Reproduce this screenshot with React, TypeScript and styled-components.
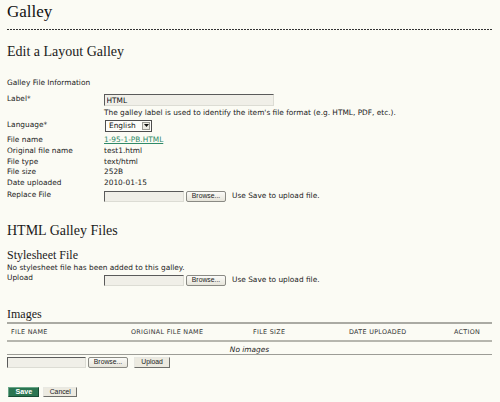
import React from 'react';
import styled, { createGlobalStyle, css } from 'styled-components';

const GlobalStyle = createGlobalStyle`
  html, body {
    margin: 0;
    padding: 0;
    background: #fbfbf4;
  }
  body {
    font-family: "DejaVu Sans", Verdana, sans-serif;
    font-size: 7.4px;
    color: #222;
  }
`;

const Page = styled.div`
  width: 500px;
  box-sizing: border-box;
  padding: 2px 8px 0 7px;
`;

const PageTitle = styled.h2`
  margin: 0;
  padding-bottom: 8px;
  font: normal 17px/20px "Liberation Serif", Georgia, serif;
  color: #111;
  background: repeating-linear-gradient(to right, #333 0 2px, transparent 2px 3px) left bottom / 100% 1px no-repeat;
`;

const Heading = styled.h3<{ $top: number }>`
  margin: ${({ $top }) => $top}px 0 0;
  font: normal 14px/16px "Liberation Serif", Georgia, serif;
  color: #1a1a1a;
`;

const SubHeading = styled.h4<{ $top: number }>`
  margin: ${({ $top }) => $top}px 0 0;
  font: normal 12px/14px "Liberation Serif", Georgia, serif;
  color: #1a1a1a;
`;

const SmallTitle = styled.div`
  margin-top: 18px;
  line-height: 10.75px;
`;

const Note = styled.div`
  margin-top: 1px;
  line-height: 10.75px;
`;

const FieldTable = styled.table<{ $top: number }>`
  margin-top: ${({ $top }) => $top}px;
  width: 100%;
  border-collapse: collapse;
  border-spacing: 0;

  td {
    padding: 0;
    vertical-align: top;
    line-height: 10.75px;
  }
`;

const FieldRow = styled.tr<{ $top?: number; $bottom?: number }>`
  & > td {
    padding-top: ${({ $top = 0 }) => $top}px;
    padding-bottom: ${({ $bottom = 0 }) => $bottom}px;
  }
`;

const LabelCell = styled.td`
  width: 97px;
`;

const TextInput = styled.input<{ $width: number; $height?: number }>`
  display: block;
  box-sizing: border-box;
  width: ${({ $width }) => $width}px;
  height: ${({ $height = 12 }) => $height}px;
  margin: 0;
  padding: 0 1.5px;
  font: 7.4px "DejaVu Sans", Verdana, sans-serif;
  color: #111;
  background: #f0efe8;
  border: 1px solid;
  border-color: #5a5a5a #dcdcd4 #dcdcd4 #5a5a5a;
  outline: none;
`;

const SelectBox = styled.div`
  display: inline-flex;
  align-items: center;
  box-sizing: border-box;
  width: 47px;
  height: 12px;
  margin-left: 1px;
  border: 1px solid #4d4d4d;
  background: #fdfdfa;
`;

const Select = styled.select`
  flex: 1;
  min-width: 0;
  height: 100%;
  margin: 0;
  padding: 0 0 0 3px;
  border: none;
  background: transparent;
  appearance: none;
  font: 7.4px "DejaVu Sans", Verdana, sans-serif;
  color: #111;
  outline: none;
`;

const ArrowButton = styled.span`
  display: flex;
  align-items: center;
  justify-content: center;
  box-sizing: border-box;
  width: 8px;
  height: 8px;
  margin-right: 1px;
  border: 1px solid #9a9a94;
  background: #ecebe4;
`;

const FileLink = styled.a`
  color: #2f8a68;
  text-decoration: underline;
`;

const FileField = styled.div<{ $top?: number }>`
  display: flex;
  align-items: center;
  margin-top: ${({ $top = 0 }) => $top}px;
`;

const Hint = styled.span`
  margin-left: 6px;
`;

type ButtonKind = 'browse' | 'plain' | 'primary';

const Button = styled.button<{ $kind: ButtonKind; $width: number; $gap?: number }>`
  box-sizing: border-box;
  width: ${({ $width }) => $width}px;
  height: 10.8px;
  margin: 0 0 0 ${({ $gap = 0 }) => $gap}px;
  padding: 0;
  font: 6.8px/1 "Liberation Sans", Tahoma, Arial, sans-serif;
  color: #222;
  cursor: pointer;

  ${({ $kind }) =>
    $kind === 'browse' &&
    css`
      border: 1px solid #8a8a84;
      border-radius: 2px;
      background: linear-gradient(#fbfbf8, #e6e4da);
    `}

  ${({ $kind }) =>
    $kind === 'plain' &&
    css`
      border: 1px solid;
      border-color: #e8e8e2 #6e6e6a #6e6e6a #e8e8e2;
      background: #eceae0;
    `}

  ${({ $kind }) =>
    $kind === 'primary' &&
    css`
      border: 1px solid;
      border-color: #6aa688 #174a32 #174a32 #6aa688;
      background: #2b7551;
      color: #fff;
      font-weight: bold;
      font-size: 7.2px;
    `}
`;

const ListTable = styled.table`
  width: 100%;
  margin-top: 1px;
  table-layout: fixed;
  border-collapse: collapse;
  border-spacing: 0;
  border-top: 2px solid #aaaaa3;
`;

const HeadCell = styled.th<{ $width?: number }>`
  box-sizing: border-box;
  width: ${({ $width }) => ($width ? `${$width}px` : 'auto')};
  padding: 2.8px 0 3.2px 4px;
  text-align: left;
  font-weight: normal;
  font-size: 6.4px;
  letter-spacing: 0.3px;
  line-height: 10px;
  color: #333;
  white-space: nowrap;
  border-bottom: 2px solid #b6b6ae;
`;

const EmptyCell = styled.td`
  padding: 2.5px 0 0.5px;
  text-align: center;
  font-style: italic;
  line-height: 9px;
  border-bottom: 1px solid #9c9c96;
`;

const Actions = styled.div`
  display: flex;
  margin-top: 18.4px;
  padding-left: 1.3px;
`;

function DropArrow() {
  return (
    <svg width="5" height="3" viewBox="0 0 5 3">
      <path d="M0 0h5L2.5 3z" fill="#111" />
    </svg>
  );
}

const fileRows = [
  ['Original file name', 'test1.html'],
  ['File type', 'text/html'],
  ['File size', '252B'],
  ['Date uploaded', '2010-01-15'],
];

const columns = [
  { title: 'FILE NAME', width: 120 },
  { title: 'ORIGINAL FILE NAME', width: 122 },
  { title: 'FILE SIZE', width: 96 },
  { title: 'DATE UPLOADED', width: 105 },
  { title: 'ACTION' },
];

export default function App() {
  return (
    <>
      <GlobalStyle />
      <Page>
        <PageTitle>Galley</PageTitle>
        <Heading $top={14}>Edit a Layout Galley</Heading>

        <SmallTitle>Galley File Information</SmallTitle>
        <FieldTable $top={5.25}>
          <tbody>
            <FieldRow>
              <LabelCell>Label*</LabelCell>
              <td>
                <TextInput $width={170} defaultValue="HTML" />
              </td>
            </FieldRow>
            <FieldRow $top={1.75}>
              <LabelCell />
              <td>The galley label is used to identify the item's file format (e.g. HTML, PDF, etc.).</td>
            </FieldRow>
            <FieldRow $top={1.25} $bottom={3}>
              <LabelCell>Language*</LabelCell>
              <td>
                <SelectBox>
                  <Select defaultValue="en">
                    <option value="en">English</option>
                  </Select>
                  <ArrowButton>
                    <DropArrow />
                  </ArrowButton>
                </SelectBox>
              </td>
            </FieldRow>
            <FieldRow>
              <LabelCell>File name</LabelCell>
              <td>
                <FileLink href="#">1-95-1-PB.HTML</FileLink>
              </td>
            </FieldRow>
            {fileRows.map(([label, value]) => (
              <FieldRow key={label}>
                <LabelCell>{label}</LabelCell>
                <td>{value}</td>
              </FieldRow>
            ))}
            <FieldRow $top={0.75}>
              <LabelCell>Replace File</LabelCell>
              <td>
                <FileField $top={1}>
                  <TextInput $width={80} $height={11.5} />
                  <Button $kind="browse" $width={40} $gap={2}>Browse...</Button>
                  <Hint>Use Save to upload file.</Hint>
                </FileField>
              </td>
            </FieldRow>
          </tbody>
        </FieldTable>

        <Heading $top={21.25}>HTML Galley Files</Heading>
        <SubHeading $top={8.3}>Stylesheet File</SubHeading>
        <Note>No stylesheet file has been added to this galley.</Note>
        <FieldTable $top={0}>
          <tbody>
            <FieldRow>
              <LabelCell>Upload</LabelCell>
              <td>
                <FileField $top={1.5}>
                  <TextInput $width={80} $height={11.5} />
                  <Button $kind="browse" $width={40} $gap={2}>Browse...</Button>
                  <Hint>Use Save to upload file.</Hint>
                </FileField>
              </td>
            </FieldRow>
          </tbody>
        </FieldTable>

        <SubHeading $top={21}>Images</SubHeading>
        <ListTable>
          <thead>
            <tr>
              {columns.map((col) => (
                <HeadCell key={col.title} $width={col.width}>{col.title}</HeadCell>
              ))}
            </tr>
          </thead>
          <tbody>
            <tr>
              <EmptyCell colSpan={5}>No images</EmptyCell>
            </tr>
          </tbody>
        </ListTable>
        <FileField $top={1.5}>
          <TextInput $width={79} $height={11.5} />
          <Button $kind="browse" $width={40} $gap={2}>Browse...</Button>
          <Button $kind="plain" $width={36} $gap={6}>Upload</Button>
        </FileField>

        <Actions>
          <Button $kind="primary" $width={31}>Save</Button>
          <Button $kind="plain" $width={34} $gap={4}>Cancel</Button>
        </Actions>
      </Page>
    </>
  );
}
